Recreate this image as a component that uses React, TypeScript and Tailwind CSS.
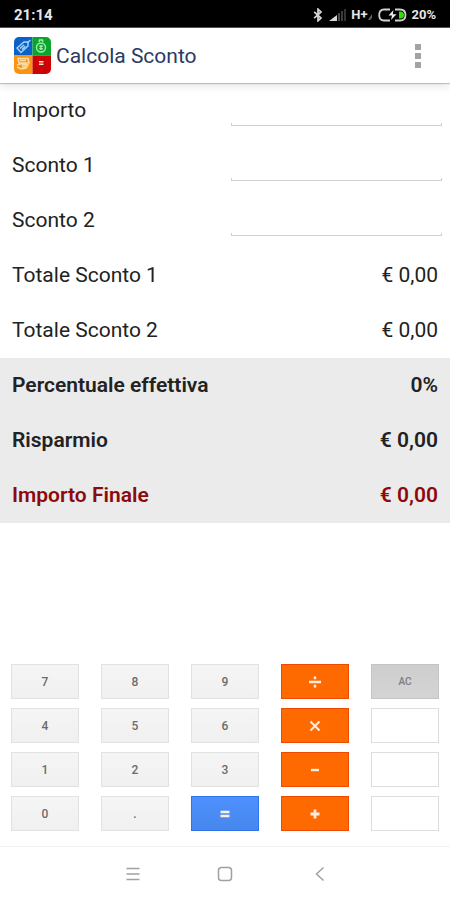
import React, { useState } from "react";

const FONT = "font-[Roboto,'Liberation_Sans',sans-serif]";

function StatusBar() {
  return (
    <div className="flex h-7 items-center justify-between border-b border-[#555] bg-black px-[14px] pt-[2px] text-[13px] font-bold text-[#e6e6e6]">
      <span className="text-[15px]">21:14</span>
      <div className="flex items-center">
        <svg className="mr-[6px]" width="10" height="14" viewBox="0 0 10 14" fill="none" stroke="#d8d8d8" strokeWidth="1.7">
          <path d="M1.2 3.8 L8 10 L5 12.8 V1.2 L8 4 L1.2 10.2" />
        </svg>
        <svg className="mr-[4px]" width="18" height="14" viewBox="0 0 18 14">
          <path d="M0 13 L8 7 V13 Z" fill="#d8d8d8" />
          <rect x="9" y="5" width="2" height="8" fill="#4a4a4a" />
          <rect x="12" y="3" width="2" height="10" fill="#3d3d3d" />
          <rect x="15" y="1" width="2" height="12" fill="#333" />
        </svg>
        <span>H+</span>
        <svg className="mr-[5px]" width="6" height="14" viewBox="0 0 6 14">
          <path d="M1 12 L5 6 V10 L3 12 Z" fill="#666" />
        </svg>
        <svg className="mr-[4px]" width="29" height="14" viewBox="0 0 29 14" fill="none">
          <path d="M12 1.5 H6 Q1.2 1.5 1.2 7 Q1.2 12.5 6 12.5 H12 M17 1.5 H22 Q27.5 1.5 27.5 7 Q27.5 12.5 22 12.5 H17" stroke="#d0d0d0" strokeWidth="1.8" />
          <path d="M21 3.5 H23 Q26 4 26 7 Q26 10 23 10.5 H21 Z" fill="#2fe000" />
          <path d="M15.5 2 L10.5 7.6 H14 L13 12 L18.5 6.2 H14.8 Z" fill="#eee" />
        </svg>
        <span>20%</span>
      </div>
    </div>
  );
}

function Logo() {
  return (
    <svg width="37" height="37" viewBox="0 0 37 37" fill="none">
      <defs>
        <clipPath id="tile">
          <rect width="37" height="37" rx="5" />
        </clipPath>
      </defs>
      <g clipPath="url(#tile)">
        <rect width="18.5" height="18.5" fill="#0a63c4" />
        <rect x="18.5" width="18.5" height="18.5" fill="#0aa52c" />
        <rect y="18.5" width="18.5" height="18.5" fill="#fb9312" />
        <rect x="18.5" y="18.5" width="18.5" height="18.5" fill="#cb0305" />
      </g>
      <g stroke="#a8d2fb" strokeWidth="1.4">
        <path d="M3 11 L10 5 L14 5 L14 9 L7 15.5 Z" />
        <path d="M6 11.5 L10 8 M8 12.5 L11.5 9.3 M13 6 L16.5 3" />
      </g>
      <g stroke="#a4eab0" strokeWidth="1.4">
        <circle cx="27" cy="10.5" r="4.5" />
        <path d="M25 5 L25.5 3 H28.5 L29 5 M27 8 V13 M25.3 9.3 H28.8 M25.3 11.8 H28.8" />
      </g>
      <g stroke="#ffdca4" strokeWidth="1.4">
        <path d="M4 21.5 H14 L15 26 H5 Z M3 28 L8 26.5 L14 28 L12 31 L7 32 L3 30 M6 23.5 H12" />
        <circle cx="10" cy="29" r="1.5" />
      </g>
      <path d="M25 24.7 H29.5 M25 27.3 H29.5" stroke="#ffdede" strokeWidth="1.5" />
    </svg>
  );
}

function Header() {
  return (
    <header className="relative z-10 flex h-[55px] items-center justify-between bg-white pr-[22px] pl-[14px] shadow-[0_1px_1px_rgba(0,0,0,0.2),0_3px_9px_rgba(0,0,0,0.1)]">
      <div className="flex items-center gap-[5px]">
        <Logo />
        <h1 className="text-[21px] text-[#2b3a63]">Calcola Sconto</h1>
      </div>
      <button type="button" aria-label="Menu" className="flex w-5 flex-col items-center gap-[3px]">
        <span className="size-[6px] bg-[#a3a3a3]" />
        <span className="size-[6px] bg-[#a3a3a3]" />
        <span className="size-[6px] bg-[#a3a3a3]" />
      </button>
    </header>
  );
}

function Field({ id, label }: { id: string; label: string }) {
  const [value, setValue] = useState("");
  return (
    <div className="flex h-[55px] items-center justify-between pr-2 pl-3">
      <label htmlFor={id} className="pb-[2px]">{label}</label>
      <div className="w-[49%]">
        <input
          id={id}
          inputMode="decimal"
          value={value}
          onChange={(e) => setValue(e.target.value)}
          className="block h-7 w-full bg-transparent px-1 text-right outline-none"
        />
        <div className="h-[3px] border-x border-b border-[#cfcfcf]" />
      </div>
    </div>
  );
}

function Result({ label, value }: { label: string; value: string }) {
  return (
    <div className="flex h-[55px] items-center justify-between px-3 pb-[2px]">
      <span>{label}</span>
      <output>{value}</output>
    </div>
  );
}

const DIGIT = "border-[#e2e2e2] bg-linear-to-b from-[#f5f5f5] to-[#f0f0f0] text-[#6b6b6b] text-[12px] font-medium";
const OPERATOR = "border-[#f04a00] bg-[#ff6a00] text-white";
const EQUALS = "border-[#2f73ea] bg-linear-to-b from-[#4d90fe] to-[#4787ed] text-white";
const CLEAR = "border-[#c4c4c4] bg-linear-to-b from-[#cecece] to-[#d4d4d4] text-[#7d7d7d] text-[10px] font-medium";
const BLANK = "border-[#dedede] bg-white";

const DIVIDE = "M1 7 H13 M7 1.5 V4.3 M7 9.7 V12.5";
const TIMES = "M2.5 2.5 L11.5 11.5 M11.5 2.5 L2.5 11.5";
const MINUS = "M3 7 H11";
const PLUS = "M2.5 7 H11.5 M7 2.5 V11.5";
const EQUAL = "M2.5 5 H11.5 M2.5 9 H11.5";

type Key = { name: string; style: string; path?: string; stroke?: number };

const KEYS: Key[] = [
  { name: "7", style: DIGIT },
  { name: "8", style: DIGIT },
  { name: "9", style: DIGIT },
  { name: "÷", style: OPERATOR, path: DIVIDE, stroke: 2.4 },
  { name: "AC", style: CLEAR },
  { name: "4", style: DIGIT },
  { name: "5", style: DIGIT },
  { name: "6", style: DIGIT },
  { name: "×", style: OPERATOR, path: TIMES, stroke: 2 },
  { name: "", style: BLANK },
  { name: "1", style: DIGIT },
  { name: "2", style: DIGIT },
  { name: "3", style: DIGIT },
  { name: "-", style: OPERATOR, path: MINUS, stroke: 2.4 },
  { name: "", style: BLANK },
  { name: "0", style: DIGIT },
  { name: ".", style: DIGIT },
  { name: "=", style: EQUALS, path: EQUAL, stroke: 2.4 },
  { name: "+", style: OPERATOR, path: PLUS, stroke: 2.8 },
  { name: "", style: BLANK },
];

function Keypad() {
  return (
    <div className="grid grid-cols-5 gap-x-[22px] gap-y-[9px] px-[11px] pb-[15px]">
      {KEYS.map((key, i) => (
        <button
          key={i}
          type="button"
          aria-label={key.name || "Tasto vuoto"}
          className={`flex h-[35px] items-center justify-center border ${key.style}`}
        >
          {key.path ? (
            <svg width="14" height="14" viewBox="0 0 14 14" fill="none" stroke="#ffece0" strokeWidth={key.stroke}>
              <path d={key.path} />
            </svg>
          ) : (
            key.name
          )}
        </button>
      ))}
    </div>
  );
}

function NavBar() {
  return (
    <nav className="flex h-[54px] items-center justify-center gap-[74px] border-t border-[#f3f3f3]">
      <button type="button" aria-label="Recenti">
        <svg width="18" height="18" viewBox="0 0 18 18" stroke="#a0a0a0" strokeWidth="1.5">
          <path d="M2.5 3.5 H15.5 M2.5 9 H15.5 M2.5 14.5 H15.5" />
        </svg>
      </button>
      <button type="button" aria-label="Home">
        <svg width="18" height="18" viewBox="0 0 18 18" fill="none" stroke="#a0a0a0" strokeWidth="1.5">
          <rect x="2.5" y="2.5" width="13" height="13" rx="3" />
        </svg>
      </button>
      <button type="button" aria-label="Indietro">
        <svg width="18" height="18" viewBox="0 0 18 18" fill="none" stroke="#a0a0a0" strokeWidth="1.5">
          <path d="M15.5 2.5 L8.5 9 L15.5 15.5" />
        </svg>
      </button>
    </nav>
  );
}

export default function App() {
  return (
    <div className={`flex min-h-screen flex-col bg-white text-[21px] leading-6 text-[#222] ${FONT}`}>
      <StatusBar />
      <Header />
      <main className="flex grow flex-col">
        <Field id="importo" label="Importo" />
        <Field id="sconto1" label="Sconto 1" />
        <Field id="sconto2" label="Sconto 2" />
        <Result label="Totale Sconto 1" value="€ 0,00" />
        <Result label="Totale Sconto 2" value="€ 0,00" />
        <section className="bg-[#ebebeb] font-semibold">
          <Result label="Percentuale effettiva" value="0%" />
          <Result label="Risparmio" value="€ 0,00" />
          <div className="text-[#8b0a0e]">
            <Result label="Importo Finale" value="€ 0,00" />
          </div>
        </section>
        <div className="min-h-6 grow" />
        <Keypad />
      </main>
      <NavBar />
    </div>
  );
}
